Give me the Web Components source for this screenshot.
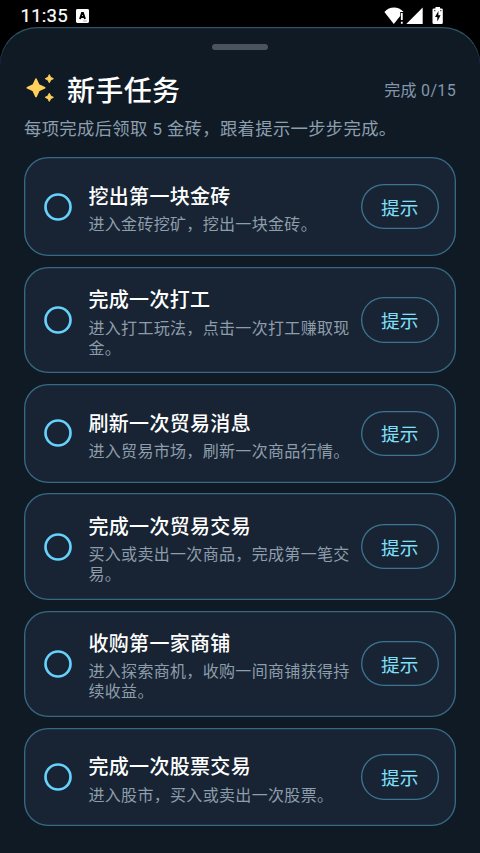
<!DOCTYPE html>
<html lang="zh-CN">
<head>
<meta charset="utf-8">
<title>新手任务</title>
<style>
html, body { margin: 0; height: 100%; background: #000; overflow: hidden; }
body { font-family: Roboto, "Noto Sans CJK SC", sans-serif; color: #fff; }
</style>
</head>
<body>
<quest-screen></quest-screen>
<script>
function define(name, html) {
  const template = document.createElement('template');
  template.innerHTML = html;
  customElements.define(name, class extends HTMLElement {
    constructor() {
      super();
      this.attachShadow({ mode: 'open' }).appendChild(template.content.cloneNode(true));
    }
  });
}

define('status-bar', `
<style>
:host { display: flex; height: 27px; box-sizing: border-box; padding: 5px 36px 0 20.5px; align-items: flex-start; }
time { width: 47.5px; font-size: 18.6px; line-height: 22px; letter-spacing: .2px; font-weight: 400; color: #fff; -webkit-text-stroke: .2px #fff; }
svg { display: block; }
.app { margin: 4px auto 0 8px; }
.sys { margin-top: 1px; }
</style>
<time>11:35</time>
<svg class="app" width="13" height="14" viewBox="0 0 13 14"><rect width="13" height="14" rx="1.4" fill="#fff"/><path d="M4 10 6 4h1l2 6M4.8 8h3.6" fill="none" stroke="#000" stroke-width="1.9"/><path d="M7 12h4" stroke="#aaa" stroke-width="1"/></svg>
<svg class="sys" width="60" height="20" viewBox="0 0 60 20">
<path d="M.4 5.9C5.7.2 14.3.2 19.6 5.9H16.2V10L9.8 18Z" fill="#fff"/>
<path d="M17.8 7v7M17.8 15.8v2" stroke="#fff" stroke-width="1.8"/>
<path d="M22.3 18 38.7 1.400V18Z" fill="#fff"/>
<path d="M51.500 1h4.500v1.500h1.500a1.300 1.300 0 0 1 1.300 1.300v12.900a1.300 1.300 0 0 1-1.300 1.300h-7.700a1.300 1.300 0 0 1-1.300-1.300V3.800a1.300 1.300 0 0 1 1.300-1.300h1.700z" fill="#fff"/>
<path d="M54.400 5 51 11h2.300v4.500l3.300-6.200h-2.200z" fill="#000"/>
<path d="M50 4.700h1.500M56 4.700h1.500" stroke="#333" stroke-width="1"/>
</svg>`);

define('sparkle-icon', `
<style>:host { display: block; width: 32px; height: 32px; } svg { display: block; }</style>
<svg width="32" height="32" viewBox="0 0 32 32" fill="#ffd15c" stroke="#ffd15c" stroke-linejoin="round">
<path stroke-width="1.600" d="M12 7 14.800 13 20.700 15.800 14.800 18.600 12 24.600 9.200 18.600 3.300 15.800 9.200 13z"/>
<path stroke-width=".9" d="M25.300 2.600 26.700 5.300 29.400 6.700 26.700 8.100 25.300 10.800 23.900 8.100 21.200 6.700 23.900 5.300zM25.300 21.200 26.700 23.900 29.400 25.300 26.700 26.700 25.300 29.400 23.900 26.700 21.200 25.300 23.900 23.900z"/>
</svg>`);

define('hint-button', `
<style>
:host { display: block; flex: none; }
button { display: block; width: 77.33px; height: 45.33px; padding: 5px 0 0; border: 0; border-radius: 22.67px; background: none; box-shadow: inset 0 0 0 1.33px #3c7390; color: #7fe0fb; font: 400 18.67px/27px Roboto, "Noto Sans CJK SC", sans-serif; letter-spacing: .13px; }
</style>
<button><slot></slot></button>`);

define('task-card', `
<style>
:host { display: flex; align-items: center; box-sizing: border-box; min-height: 98.67px; padding: 18.67px 17.5px 18.67px 18px; border-radius: 24px; background: #182433; box-shadow: inset 0 0 0 1.33px #356984; }
svg { display: block; flex: none; margin-right: 14.4px; }
.copy { flex: 1; min-width: 0; margin: 0 10.6px -4px 0; }
h2 { margin: 0; font-size: 20px; line-height: 31.33px; letter-spacing: .33px; font-weight: 500; white-space: nowrap; }
p { margin: 2px 0 0; font-size: 16px; line-height: 20px; letter-spacing: .33px; color: #8d9dab; }
</style>
<svg width="32" height="32" viewBox="0 0 32 32"><circle cx="16" cy="16" r="12.5" fill="none" stroke="#66d1fb" stroke-width="2.67"/></svg>
<div class="copy"><h2><slot name="title"></slot></h2><p><slot></slot></p></div>
<hint-button>提示</hint-button>`);

define('quest-screen', `
<style>
:host { display: flex; flex-direction: column; height: 100vh; overflow: hidden; background: #000; }
status-bar { flex: none; }
main { flex: 1; box-sizing: border-box; padding: 17px 24px 0; border-radius: 37px 37px 0 0; background: #101a25; box-shadow: inset 0 1.33px 0 #2d5364; }
.grip { width: 56px; height: 5.6px; margin: 0 auto; border-radius: 3px; background: #4d535e; }
header { display: flex; align-items: center; height: 42px; margin-top: 18.4px; }
h1 { margin: 6px auto 0 11px; font-size: 28px; line-height: 42px; letter-spacing: .33px; font-weight: 500; }
sparkle-icon { margin-top: -1px; }
.count { font-size: 16px; letter-spacing: .33px; color: #8397aa; }
.intro { margin: 6px 0 0; font-size: 17.33px; line-height: 26px; letter-spacing: .33px; color: #8d9eae; white-space: nowrap; }
.list { display: flex; flex-direction: column; gap: 10.67px; margin-top: 15.3px; }
</style>
<status-bar></status-bar>
<main>
<div class="grip"></div>
<header><sparkle-icon></sparkle-icon><h1>新手任务</h1><span class="count">完成 0/15</span></header>
<p class="intro">每项完成后领取 5 金砖，跟着提示一步步完成。</p>
<div class="list">
<task-card><span slot="title">挖出第一块金砖</span>进入金砖挖矿，挖出一块金砖。</task-card>
<task-card><span slot="title">完成一次打工</span>进入打工玩法，点击一次打工赚取现金。</task-card>
<task-card><span slot="title">刷新一次贸易消息</span>进入贸易市场，刷新一次商品行情。</task-card>
<task-card><span slot="title">完成一次贸易交易</span>买入或卖出一次商品，完成第一笔交易。</task-card>
<task-card><span slot="title">收购第一家商铺</span>进入探索商机，收购一间商铺获得持续收益。</task-card>
<task-card><span slot="title">完成一次股票交易</span>进入股市，买入或卖出一次股票。</task-card>
</div>
</main>`);
</script>
</body>
</html>
